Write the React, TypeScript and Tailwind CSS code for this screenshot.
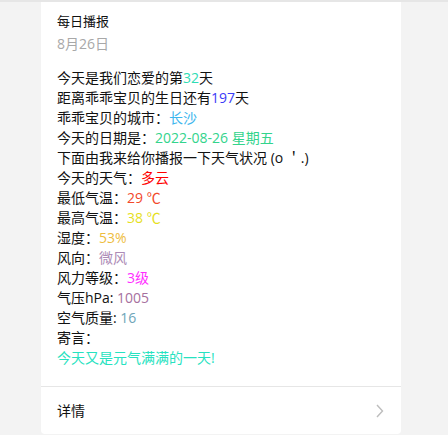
import React from "react";

const font = { fontFamily: '"Open Sans", "Noto Sans CJK SC", sans-serif' };

export default function App() {
  return (
    <div className="w-[448px] h-[435px] bg-[#f3f3f3] border-t-2 border-[#e6e6e6] overflow-hidden" style={font}>
      <div className="ml-[41px] w-[360px] bg-white rounded-b-[4px]">
        <div className="pl-4 pt-[10px]">
          <div className="text-[13px] leading-[18px] text-[#111]">每日播报</div>
          <div className="mt-[4px] text-[14px] leading-[20px] text-[#a8a8a8]">8月26日</div>
          <div className="mt-[14px] text-[14px] leading-[20px] text-[#111]">
            <div>今天是我们恋爱的第<span className="text-[#2fdcb4]">32</span>天</div>
            <div>距离乖乖宝贝的生日还有<span className="text-[#3b3bf7]">197</span>天</div>
            <div>乖乖宝贝的城市：<span className="text-[#3cb6ee]">长沙</span></div>
            <div>今天的日期是：<span className="text-[#33d48c]">2022-08-26 星期五</span></div>
            <div>下面由我来给你播报一下天气状况 (o ＇.)</div>
            <div>今天的天气：<span className="text-[#ff0000]">多云</span></div>
            <div>最低气温：<span className="text-[#f2482a]">29 ℃</span></div>
            <div>最高气温：<span className="text-[#e6e01e]">38 ℃</span></div>
            <div>湿度：<span className="text-[#eebd3e]">53%</span></div>
            <div>风向：<span className="text-[#ac8bb6]">微风</span></div>
            <div>风力等级：<span className="text-[#ff2dff]">3级</span></div>
            <div>气压hPa: <span className="text-[#a6709e]">1005</span></div>
            <div>空气质量: <span className="text-[#6ea5b8]">16</span></div>
            <div>寄言：</div>
            <div className="text-[#26e2c0]">今天又是元气满满的一天!</div>
          </div>
        </div>
        <div className="mt-[18px] border-t border-[#e6e6e6] h-[48px] flex items-center justify-between pl-4 pr-[17px]">
          <span className="text-[14px] leading-[20px] text-[#111] mt-[1px]">详情</span>
          <svg width="8" height="14" viewBox="0 0 8 14" className="mt-[1px]">
            <polyline points="1,1 6.5,7 1,13" fill="none" stroke="#bdbdbd" strokeWidth="1.4" />
          </svg>
        </div>
      </div>
    </div>
  );
}
